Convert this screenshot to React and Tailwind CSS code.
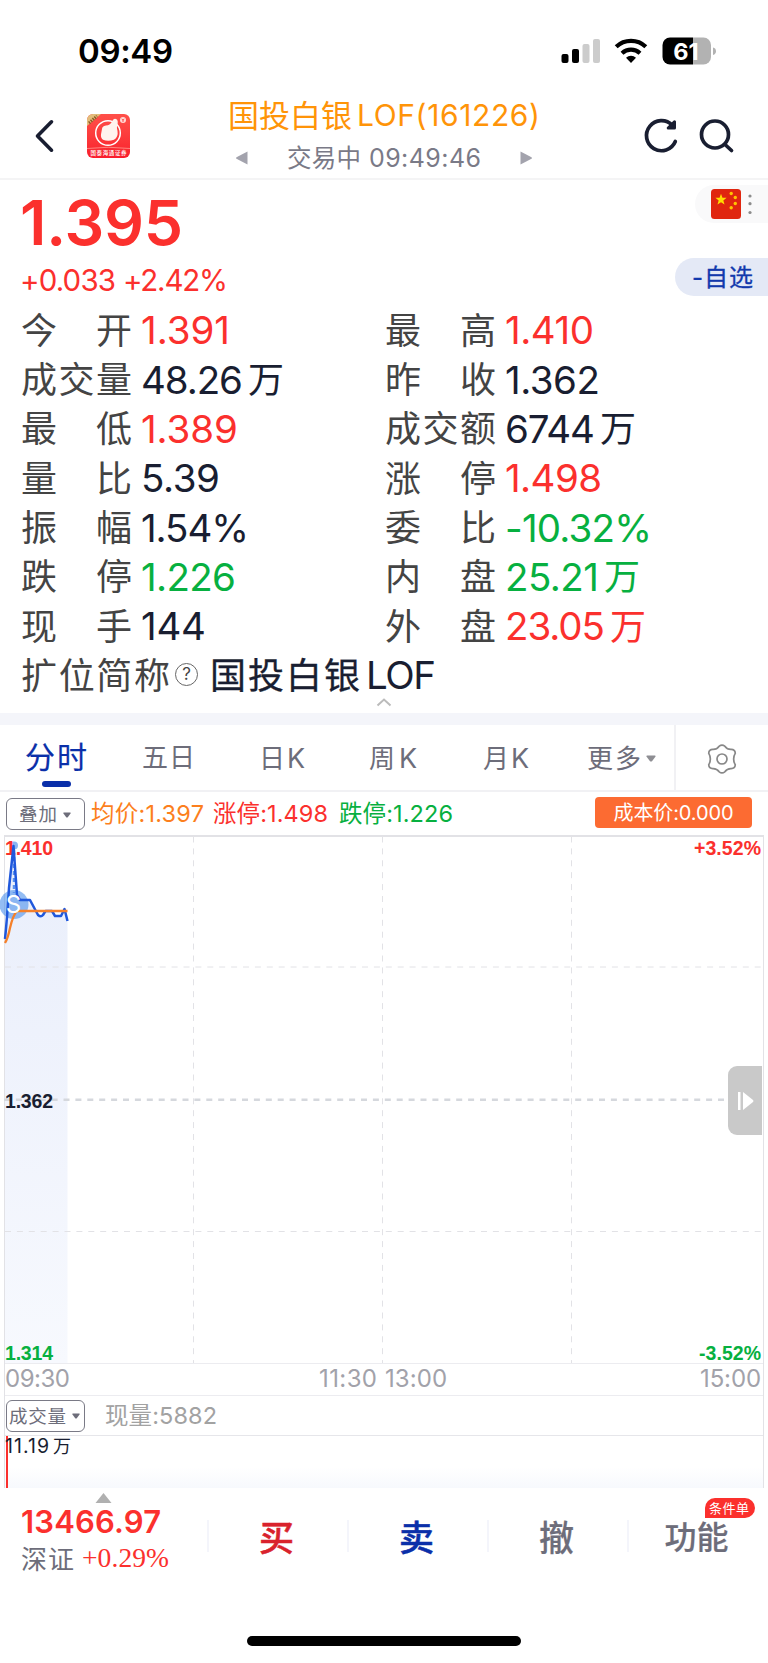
import { useLayoutEffect, useRef } from "react";

const SANS = "font-['Inter','Noto_Sans_CJK_SC',sans-serif]";

// Tracks a run of text so that it spans a given width.
function Fit({ w, className = "", children }) {
  const ref = useRef(null);
  useLayoutEffect(() => {
    const el = ref.current;
    el.style.letterSpacing = "0px";
    const n = el.textContent.length;
    const s = (w - el.getBoundingClientRect().width) / Math.max(1, n - 1);
    el.style.letterSpacing = s + "px";
    el.style.marginRight = -s + "px";
  }, [w, children]);
  return (
    <span ref={ref} className={"inline-block leading-none whitespace-pre " + className}>
      {children}
    </span>
  );
}

function Label({ text }) {
  return (
    <span className="flex w-[111px] justify-between text-[36px] leading-none text-[#444]">
      {text.split("").map((c, i) => (
        <span key={i}>{c}</span>
      ))}
    </span>
  );
}

const RED = "text-[#fb302d]";
const INK = "text-[#191e31]";
const GREEN = "text-[#07b040]";

const ROWS = [
  ["今开", "1.391", 89, RED, "最高", "1.410", 89, RED],
  ["成交量", "48.26万", 143, INK, "昨收", "1.362", 95, INK],
  ["最低", "1.389", 97, RED, "成交额", "6744万", 131, INK],
  ["量比", "5.39", 79, INK, "涨停", "1.498", 97, RED],
  ["振幅", "1.54%", 108, INK, "委比", "-10.32%", 147, GREEN],
  ["跌停", "1.226", 95, GREEN, "内盘", "25.21万", 135, GREEN],
  ["现手", "144", 65, INK, "外盘", "23.05万", 141, RED],
];

function Value({ text, w, tone }) {
  const unit = text.endsWith("万");
  return (
    <span className={"flex items-center " + tone}>
      <Fit w={unit ? w - 41 : w} className="text-[38.5px]">
        {unit ? text.slice(0, -1) : text}
      </Fit>
      {unit && <span className="ml-[5px] text-[36px] leading-none">万</span>}
    </span>
  );
}

function StatusBar() {
  return (
    <div className="flex h-[96px] items-start pt-[35px] pl-[78px]">
      <Fit w={95} className="text-[33px] font-semibold text-black">09:49</Fit>
      <div className="ml-[388px] flex pt-[2px]">
        <svg className="block h-[28px] w-[156px]" viewBox="561 37 156 28">
          <rect x="561.5" y="54" width="7" height="9" rx="2" fill="#000" />
          <rect x="572" y="49" width="7" height="14" rx="2" fill="#000" />
          <rect x="582.5" y="44" width="7" height="19" rx="2" fill="#ccc" />
          <rect x="593" y="39" width="7" height="24" rx="2" fill="#ccc" />
          <g fill="none" stroke="#000" strokeWidth="4.2">
            <path d="M616.2 46.8a21.5 21.5 0 0 1 29.6 0" />
            <path d="M622 53.2a13.3 13.3 0 0 1 18 0" />
          </g>
          <path d="M631 63l-5-5.2a7.4 7.4 0 0 1 10 0z" fill="#000" />
          <path d="M670 37.5h23v27h-23a7.5 7.5 0 0 1-7.500-7.500v-12a7.500 7.500 0 0 1 7.500-7.500z" fill="#000" />
          <path d="M693 37.500h10.500a7.500 7.500 0 0 1 7.500 7.500v12a7.500 7.500 0 0 1-7.500 7.500h-10.500z" fill="#b2b2b2" />
          <path d="M713 47.500q3 .8 3 3.700t-3 3.700z" fill="#b2b2b2" />
          <text x="686" y="59.500" textAnchor="middle" fontSize="23.500" fontWeight="700" letterSpacing="0" fill="#fff">61</text>
        </svg>
      </div>
    </div>
  );
}

function Header() {
  return (
    <div className="flex h-[84px] border-b-2 border-[#f4f4f5]">
      <svg className="mt-[22px] ml-[33px] block h-[36px] w-[24px]" viewBox="33 118 24 36">
        <path d="M51.500 121.800L37.500 136l14 14.200" fill="none" stroke="#191e31" strokeWidth="3.600" strokeLinecap="round" strokeLinejoin="round" />
      </svg>
      <div className="mt-[18px] ml-[30px] h-[44px] w-[43px] overflow-hidden rounded-[6px] bg-linear-to-b from-[#ff4f49] to-[#f91c2c]">
        <svg className="block h-[44px] w-[43px]" viewBox="0 0 43 44">
          <path d="M0 0h14L0 12z" fill="#e3bd7b" />
          <path d="M2 9L10 2" stroke="#8a5a26" strokeWidth="3" strokeDasharray="1.500 1" />
          <circle cx="21" cy="19" r="12.300" fill="none" stroke="#fff" strokeWidth="1.500" />
          <path d="M15 15q0-3 4-3.500q4 0 6-4q1.500-3.500 4-2.500q2.800 1.200 1.200 6.500q-.8 3 .3 5.500q1 6-3.500 8.800q-6 2-11 0q-2.500-2-2-5.500z" fill="#fff4ee" />
          <circle cx="36" cy="6" r="3" fill="#ffd9d4" />
          <path d="M34.800 4.800l1.200 1.400 1.200-1.400M36 6v2" stroke="#f33" strokeWidth=".8" fill="none" />
          <path d="M0 34.500q21-2.500 43 0" stroke="#ff9a90" strokeWidth=".8" fill="none" />
          <text x="21.500" y="41" textAnchor="middle" fontSize="5.500" fontWeight="500" fill="#fff" textLength="36">国泰海通证券</text>
        </svg>
      </div>
      <div className="ml-[98px] flex w-[312px] flex-col items-center">
        <div className="flex h-[38px] items-center">
          <Fit w={124} className="text-[31px] text-[#ff9408]">国投白银</Fit>
          <Fit w={183} className="ml-[5px] text-[30px] text-[#ff9408]">LOF(161226)</Fit>
        </div>
        <div className="flex h-[44px] w-[296px] items-center pt-[4px]">
          <svg className="block h-[14px] w-[12px]" viewBox="0 0 12 14"><path d="M11.500 .5v13L.5 7.800q-.8-.8 0-1.600z" fill="#a3a3ad" /></svg>
          <div className="flex flex-1 justify-center">
            <Fit w={74} className="text-[24.500px] text-[#7a7a87]">交易中</Fit>
            <Fit w={112} className="ml-[8px] text-[25px] text-[#7a7a87]">09:49:46</Fit>
          </div>
          <svg className="block h-[14px] w-[12px]" viewBox="0 0 12 14"><path d="M.5 .5v13l11-5.700q.8-.8 0-1.600z" fill="#a3a3ad" /></svg>
        </div>
      </div>
      <svg className="mt-[20px] ml-[100px] block h-[40px] w-[96px]" viewBox="640 116 96 40">
        <g fill="none" stroke="#191e31" strokeWidth="3.700" strokeLinecap="round" strokeLinejoin="round">
          <path d="M675.300 141.500a15 15 0 1 1-3-16.200" />
          <path d="M674.500 121.800v6.300h-6.300l6.300-6.300" strokeWidth="3" />
          <circle cx="715" cy="134.500" r="13.500" />
          <path d="M725 144.500l6.500 6" />
        </g>
      </svg>
    </div>
  );
}

function Quote() {
  return (
    <div className="h-[533px]">
      <div className="flex h-[126px] justify-between pl-[20px]">
        <div className="flex flex-col">
          <div className="flex h-[86px] items-center pb-[2px]">
            <Fit w={163} className="text-[62.500px] font-semibold text-[#fb302d]">1.395</Fit>
          </div>
          <div className="flex h-[29px] items-center">
            <Fit w={96} className="text-[29.500px] text-[#fb302d]">+0.033</Fit>
            <Fit w={105} className="ml-[7px] text-[29.500px] text-[#fb302d]">+2.42%</Fit>
          </div>
        </div>
        <div className="flex flex-col items-end pt-[5px]">
          <div className="flex h-[38px] w-[73px] items-center rounded-l-full bg-[#f9f9fa] pl-[16px]">
            <svg className="block h-[30px] w-[30px]" viewBox="0 0 30 30">
              <rect width="30" height="30" rx="3.500" fill="#e0260f" />
              <path d="M10 4.800l1.450 3.900 4.150.15-3.250 2.600 1.150 4-3.500-2.300-3.500 2.300 1.150-4L4.400 8.850l4.150-.15z" fill="#ffde00" />
              <g fill="#ffc400">
                <circle cx="20.200" cy="4.500" r="1.700" /><circle cx="24.300" cy="8.500" r="1.700" />
                <circle cx="24.300" cy="14.500" r="1.700" /><circle cx="20.200" cy="18.800" r="1.700" />
              </g>
            </svg>
            <svg className="ml-[7px] block h-[24px] w-[4px]" viewBox="0 0 4 24" fill="#8c8c8c">
              <circle cx="2" cy="4" r="1.600" /><circle cx="2" cy="11.700" r="1.600" /><circle cx="2" cy="20.500" r="1.600" />
            </svg>
          </div>
          <div className="mt-[35px] flex h-[38px] w-[93px] items-center rounded-l-full bg-[#e4e9f6] pt-[2px] pl-[17px]">
            <Fit w={61} className="text-[24px] text-[#1239ad] [-webkit-text-stroke:0.3px]">-自选</Fit>
          </div>
        </div>
      </div>
      {ROWS.map(([l, v, w, t, l2, v2, w2, t2]) => (
        <div key={l} className="flex h-[49.350px] items-center pl-[21px]">
          <div className="flex w-[364px] items-center gap-[9px]">
            <Label text={l} />
            <Value text={v} w={w} tone={t} />
          </div>
          <div className="flex items-center gap-[9px]">
            <Label text={l2} />
            <Value text={v2} w={w2} tone={t2} />
          </div>
        </div>
      ))}
      <div className="flex h-[49.350px] items-center pb-[1px] pl-[21px]">
        <Fit w={149} className="text-[36px] text-[#444]">扩位简称</Fit>
        <span className="mt-[-3px] ml-[5px] flex size-[23px] items-center justify-center rounded-full border border-[#666] text-[17px] leading-none text-[#444]">?</span>
        <Fit w={150} className="ml-[12px] text-[36px] text-[#191e31] [-webkit-text-stroke:0.3px]">国投白银</Fit>
        <Fit w={70} className="ml-[6px] text-[38.500px] text-[#191e31]">LOF</Fit>
      </div>
      <svg className="mx-auto mt-[-4px] block h-[10px] w-[16px]" viewBox="0 0 16 10">
        <path d="M1.500 8.500l6.500-6 6.500 6" fill="none" stroke="#bbb" strokeWidth="2" />
      </svg>
    </div>
  );
}

function Caret({ className }) {
  return (
    <svg className={"block " + className} viewBox="0 0 10 7">
      <path d="M1 .5h8q1 .3.400 1.200L6 6.200q-1 .8-2 0L.6 1.700Q0 .8 1 .5z" fill="currentColor" />
    </svg>
  );
}

function Tabs() {
  return (
    <div className="flex h-[67px] border-b-2 border-[#f1f1f4] text-[#6d6d7a]">
      <div className="ml-[25px] flex w-[117px] flex-col pt-[17px]">
        <Fit w={62} className="self-start text-[30px] text-[#0a2fa9] [-webkit-text-stroke:0.2px]">分时</Fit>
        <span className="mt-[9px] ml-[17px] h-[6px] w-[29px] rounded-full bg-[#0a2fa9]" />
      </div>
      <div className="flex w-[532px] items-center pt-[2px]">
        <div className="w-[117px]"><Fit w={53} className="text-[26px]">五日</Fit></div>
        <div className="flex w-[110px] items-center"><span className="text-[26px] leading-none">日</span><span className="ml-[2px] text-[27px] leading-none">K</span></div>
        <div className="flex w-[114px] items-center"><span className="text-[26px] leading-none">周</span><span className="ml-[4px] text-[27px] leading-none">K</span></div>
        <div className="flex w-[104px] items-center"><span className="text-[26px] leading-none">月</span><span className="ml-[2px] text-[27px] leading-none">K</span></div>
        <Fit w={54} className="text-[26px]">更多</Fit>
        <Caret className="ml-[5px] h-[7px] w-[10px] text-[#8e8e93]" />
      </div>
      <div className="flex flex-1 items-center justify-center border-l-2 border-[#f1f1f4] pt-[2px]">
        <svg className="block size-[32px]" viewBox="-16 -16 32 32" fill="none" stroke="#888" strokeWidth="1.700">
          <path strokeLinejoin="round" d="M-2.800-12.800Q0-15 2.800-12.800Q5.200-9.400 9.200-9.600Q13-9.600 13.300-5.800Q10 0 13.300 5.800Q13 9.600 9.200 9.600Q5.200 9.400 2.800 12.800Q0 15-2.800 12.800Q-5.200 9.400-9.200 9.600Q-13 9.600-13.300 5.800Q-10 0-13.300-5.800Q-13-9.600-9.200-9.600Q-5.200-9.400-2.800-12.800z" />
          <circle r="5" />
        </svg>
      </div>
    </div>
  );
}

function Legend() {
  return (
    <div className="flex h-[43px] items-start pl-[6px]">
      <div className="mt-[6px] flex h-[32px] w-[79px] items-center rounded-[6px] border-[1.500px] border-[#7a7a86] pt-[1px] pl-[12px] text-[#6d6d7a]">
        <Fit w={38} className="text-[18.500px]">叠加</Fit>
        <Caret className="ml-[6px] h-[6px] w-[8px]" />
      </div>
      <div className="flex h-[43px] items-center">
        <Fit w={113} className="ml-[6px] text-[23.500px] text-[#fc7f1d]">均价:1.397</Fit>
        <Fit w={115} className="ml-[9px] text-[23.500px] text-[#fb302d]">涨停:1.498</Fit>
        <Fit w={114} className="ml-[11px] text-[23.500px] text-[#07b040]">跌停:1.226</Fit>
      </div>
      <div className="mt-[5px] ml-[142px] flex h-[31px] w-[157px] items-center justify-center rounded-[4px] bg-[#fc6b32]">
        <Fit w={120} className="text-[20px] text-white">成本价:0.000</Fit>
      </div>
    </div>
  );
}

function Chart() {
  return (
    <div className="relative h-[528px]">
      <svg className="block h-[528px] w-[768px]" viewBox="0 835 768 528">
        <defs>
          <linearGradient id="area" x1="0" y1="0" x2="0" y2="1">
            <stop offset="0" stopColor="#e9eefb" />
            <stop offset="1" stopColor="#f7f9fe" />
          </linearGradient>
        </defs>
        <path d="M5 939L9 880 13 846 18 897 29 900 40 916H43L46 911H52L55 916H61L64 911 67.500 921V1363H5z" fill="url(#area)" />
        <g stroke="#e2e2e6" fill="none">
          <path d="M193.500 836.500V1363M382.500 836.500V1363M571.500 836.500V1363" strokeDasharray="6 5.900" />
          <path d="M5 967H763M5 1231.500H763" strokeDasharray="6 5.900" />
          <path d="M4 836H764" strokeWidth="2" />
          <path d="M4.500 836V1363M763.500 836V1363" />
        </g>
        <path d="M4 1099.700H763" stroke="#d5d8dd" strokeWidth="2.500" strokeDasharray="6 5.900" />
        <circle cx="14" cy="904.500" r="14.500" fill="#3d86ea" fillOpacity=".55" />
        <circle cx="14" cy="845.500" r="4" fill="#3d86ea" fillOpacity=".6" />
      </svg>
      <div className="absolute inset-0 flex flex-col justify-between pr-[7px] pl-[5px] font-['Liberation_Sans',sans-serif] text-[19.500px] leading-none font-bold">
        <div className="flex justify-between pt-[4px]">
          <Fit w={48} className="text-[#fb302d]">1.410</Fit>
          <Fit w={67} className="text-[#fb302d]">+3.52%</Fit>
        </div>
        <Fit w={48} className="mb-[-2px] self-start text-[#191e31]">1.362</Fit>
        <div className="flex justify-between">
          <Fit w={48} className="text-[#07b040]">1.314</Fit>
          <Fit w={62} className="text-[#07b040]">-3.52%</Fit>
        </div>
      </div>
      <svg className="absolute top-0 left-0 block h-[528px] w-[80px]" viewBox="0 835 80 528" fill="none" strokeLinejoin="round">
        <path d="M14 850V893" stroke="#5b93f0" strokeWidth="2.500" strokeDasharray="4 3" />
        <path d="M5 939Q7 920 9 888L13.500 846 17 895 20 900H30L38 915Q41 917.500 43 915L45.500 911H52L55 916H61L64.500 909 67.500 921" stroke="#2058dc" strokeWidth="2.500" />
        <path d="M5 943Q8 938 10 928Q13 915 17 911H67.500" stroke="#f5802a" strokeWidth="2.300" />
        <text x="13.500" y="913" textAnchor="middle" fontSize="24" fill="#fff">S</text>
      </svg>
      <div className="absolute top-[231px] left-[728px] flex h-[69px] w-[34px] items-center rounded-l-[9px] bg-[#c9c9c9] pl-[10px]">
        <svg className="block h-[18px] w-[16px]" viewBox="0 0 16 18" fill="#fff">
          <path d="M0 0h2.500v18H0zM5 0l10 8q1 1 0 2L5 18z" />
        </svg>
      </div>
    </div>
  );
}

function Volume() {
  return (
    <div className="mx-[4px] h-[125px] border-x border-[#e2e2e6]">
      <div className="flex h-[33px] items-center border-y border-[#ececf0] pb-[1px] text-[24px] text-[#a2a2aa]">
        <Fit w={65}>09:30</Fit>
        <Fit w={58} className="ml-[249px]">11:30</Fit>
        <Fit w={62} className="ml-[8px]">13:00</Fit>
        <Fit w={61} className="ml-[253px]">15:00</Fit>
      </div>
      <div className="flex h-[40px] items-center border-b border-[#e6e6ea] pl-px">
        <div className="flex h-[32px] w-[79px] items-center rounded-[6px] border-[1.500px] border-[#7a7a86] pt-[1px] pl-[2px] text-[#6d6d7a]">
          <Fit w={57} className="text-[18.500px]">成交量</Fit>
          <Caret className="ml-[6px] h-[6px] w-[8px]" />
        </div>
        <Fit w={112} className="ml-[20px] text-[23.500px] text-[#a2a2a2]">现量:5882</Fit>
      </div>
      <div className="flex h-[52px] bg-linear-to-b from-white from-60% to-[#f7f9fd]">
        <span className="ml-[1px] h-full w-[2px] bg-[#fb302d]" />
        <Fit w={44} className="ml-[-3px] pt-[1px] text-[19.500px] text-[#191e31]">11.19</Fit>
        <Fit w={18} className="ml-[4px] pt-[2px] text-[18px] text-[#191e31]">万</Fit>
      </div>
    </div>
  );
}

function BottomBar() {
  return (
    <div className="h-[175px]">
      <div className="flex h-[148px]">
        <div className="flex w-[207px] flex-col pl-[21px]">
          <svg className="mt-[5px] ml-[74px] block h-[10px] w-[17px]" viewBox="0 0 17 10"><path d="M8.500 0l8 10H.5z" fill="#b0b0b0" /></svg>
          <Fit w={140} className="mt-[3px] self-start text-[31px] font-semibold text-[#fb302d]">13466.97</Fit>
          <div className="mt-[10px] flex items-center">
            <Fit w={53} className="text-[26px] text-[#6d6d7a]">深证</Fit>
            <Fit w={87} className="mt-[-5px] ml-[8px] font-['Liberation_Serif',serif] text-[27.500px] text-[#fb302d]">+0.29%</Fit>
          </div>
        </div>
        <div className="mt-[32px] flex h-[32px] items-center font-medium">
          <div className="flex h-full w-[140px] items-center justify-center border-l-2 border-[#f4f5fb] pt-[4px] pr-[3px] text-[35px] leading-none text-[#d9222c] [-webkit-text-stroke:0.5px]">买</div>
          <div className="flex h-full w-[140px] items-center justify-center border-l-2 border-[#f4f5fb] pt-[4px] pr-[3px] text-[35px] leading-none text-[#0a2fa9] [-webkit-text-stroke:0.5px]">卖</div>
          <div className="flex h-full w-[140px] items-center justify-center border-l-2 border-[#f4f5fb] pt-[4px] pr-[3px] text-[35px] leading-none text-[#6d6d7a] [-webkit-text-stroke:0.2px]">撤</div>
          <div className="relative flex h-full w-[140px] items-center justify-center border-l-2 border-[#f4f5fb] pt-[4px] pr-[3px] text-[32px] leading-none text-[#6d6d7a] [-webkit-text-stroke:0.2px]">
            功能
            <span className="absolute top-[-22px] left-[76px] flex h-[20px] w-[50px] items-center rounded-full rounded-bl-none bg-[#fb302d] pl-[4px] font-normal [-webkit-text-stroke:0px]">
              <Fit w={40} className="text-[13px] text-white">条件单</Fit>
            </span>
          </div>
        </div>
      </div>
      <div className="mx-auto h-[10px] w-[274px] rounded-full bg-black" />
    </div>
  );
}

export default function App() {
  return (
    <div className={"h-[1663px] w-[768px] overflow-hidden bg-white " + SANS}>
      <StatusBar />
      <Header />
      <Quote />
      <div className="h-[12px] bg-[#f4f5fa]" />
      <Tabs />
      <Legend />
      <Chart />
      <Volume />
      <BottomBar />
    </div>
  );
}
